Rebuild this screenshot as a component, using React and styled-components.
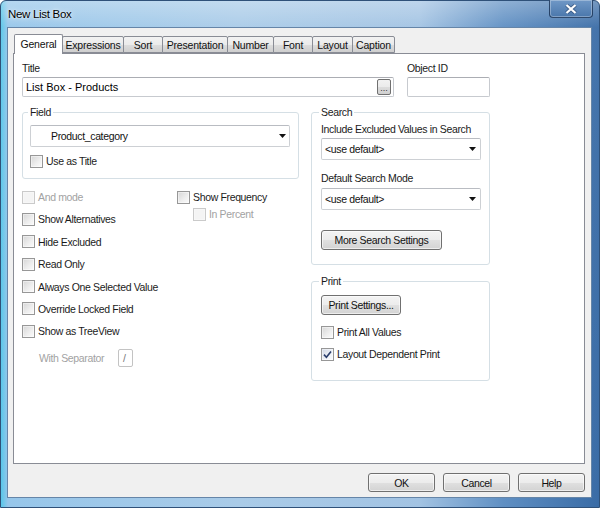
import React from 'react';
import styled, { createGlobalStyle } from 'styled-components';

const GlobalStyle = createGlobalStyle`
  html, body {
    margin: 0;
    padding: 0;
  }
  body {
    width: 600px;
    height: 508px;
    overflow: hidden;
    font-family: 'Liberation Sans', Arial, sans-serif;
    font-size: 10.5px;
    letter-spacing: -0.35px;
    color: #1b1b1b;
  }
  * {
    box-sizing: border-box;
  }
`;

const tabs = [
  { label: 'General', width: 49, active: true },
  { label: 'Expressions', width: 62 },
  { label: 'Sort', width: 40 },
  { label: 'Presentation', width: 66 },
  { label: 'Number', width: 47 },
  { label: 'Font', width: 40 },
  { label: 'Layout', width: 41 },
  { label: 'Caption', width: 43 },
];

const options = [
  { label: 'And mode', disabled: true },
  { label: 'Show Alternatives' },
  { label: 'Hide Excluded' },
  { label: 'Read Only' },
  { label: 'Always One Selected Value' },
  { label: 'Override Locked Field' },
  { label: 'Show as TreeView' },
];

const Check = ({ checked, disabled, label, indent }) => (
  <CheckRow $indent={indent}>
    <Box $disabled={disabled} $checked={checked}>
      {checked && (
        <svg width="9" height="9" viewBox="0 0 9 9">
          <path d="M1 4.6 L3.4 7.2 L8 1.4" fill="none" stroke="#2a3d6c" strokeWidth="1.6" />
        </svg>
      )}
    </Box>
    <Text $disabled={disabled}>{label}</Text>
  </CheckRow>
);

const Arrow = () => (
  <svg width="7" height="4" viewBox="0 0 7 4">
    <polygon points="0,0 7,0 3.5,4" fill="#111" />
  </svg>
);

const App = () => {
  return (
    <>
      <GlobalStyle />
      <Window>
        <TitleBar>
          <Caption>New List Box</Caption>
          <CloseButton aria-label="Close">
            <svg width="12" height="10" viewBox="0 0 12 10">
              <path d="M1.5 1 L10.5 9 M10.5 1 L1.5 9" stroke="#1c3457" strokeWidth="4" strokeOpacity="0.45" />
              <path d="M1.5 1 L10.5 9 M10.5 1 L1.5 9" stroke="#fff" strokeWidth="2.2" />
            </svg>
          </CloseButton>
        </TitleBar>

        <Client>
          <Tabs>
            {tabs.map((t) => (
              <Tab key={t.label} $active={t.active} $width={t.width}>
                {t.label}
              </Tab>
            ))}
          </Tabs>

          <Panel>
            <TopRow>
              <FieldBlock $width={372}>
                <Label>Title</Label>
                <TextBox>
                  <span>List Box - Products</span>
                  <EllipsisButton>...</EllipsisButton>
                </TextBox>
              </FieldBlock>
              <FieldBlock $width={83}>
                <Label>Object ID</Label>
                <TextBox />
              </FieldBlock>
            </TopRow>

            <Columns>
              <Column>
                <Group $pad="6px 8px 10px 7px">
                  <Legend>Field</Legend>
                  <Dropdown $indent={20}>
                    <span>Product_category</span>
                    <ArrowSlot $right={3}>
                      <Arrow />
                    </ArrowSlot>
                  </Dropdown>
                  <Spacer $h={7} />
                  <Check label="Use as Title" />
                </Group>

                <Options>
                  <OptionList>
                    {options.map((o) => (
                      <Check key={o.label} label={o.label} disabled={o.disabled} />
                    ))}
                    <SeparatorRow>
                      <SeparatorLabel>With Separator</SeparatorLabel>
                      <SeparatorInput>/</SeparatorInput>
                    </SeparatorRow>
                  </OptionList>
                  <FrequencyList>
                    <Check label="Show Frequency" />
                    <Check label="In Percent" disabled indent={16} />
                  </FrequencyList>
                </Options>
              </Column>

              <Column>
                <Group $pad="3px 8px 14px 9px">
                  <Legend>Search</Legend>
                  <Label>Include Excluded Values in Search</Label>
                  <Dropdown $indent={3}>
                    <span>&lt;use default&gt;</span>
                    <ArrowSlot $right={4}>
                      <Arrow />
                    </ArrowSlot>
                  </Dropdown>
                  <Spacer $h={11} />
                  <Label>Default Search Mode</Label>
                  <Dropdown $indent={3} $gap={1}>
                    <span>&lt;use default&gt;</span>
                    <ArrowSlot $right={4}>
                      <Arrow />
                    </ArrowSlot>
                  </Dropdown>
                  <Spacer $h={20} />
                  <PushButton $width={121}>More Search Settings</PushButton>
                </Group>

                <Group $pad="7px 8px 19px 9px" $top={9}>
                  <Legend>Print</Legend>
                  <PushButton $width={80}>Print Settings...</PushButton>
                  <Spacer $h={10} />
                  <Check label="Print All Values" />
                  <Spacer $h={8} />
                  <Check label="Layout Dependent Print" checked />
                </Group>
              </Column>
            </Columns>
          </Panel>

          <Footer>
            <PushButton $width={67} $height={19}>OK</PushButton>
            <PushButton $width={67} $height={19}>Cancel</PushButton>
            <PushButton $width={67} $height={19}>Help</PushButton>
          </Footer>
        </Client>
      </Window>
    </>
  );
};

const Window = styled.div`
  width: 600px;
  height: 508px;
  display: flex;
  flex-direction: column;
  padding: 0 7px 9px 6px;
  border: 1px solid #2f5179;
  border-radius: 6px 6px 0 0;
  background:
    linear-gradient(180deg, rgba(255, 255, 255, 0.3) 0, rgba(255, 255, 255, 0.05) 26px, rgba(255, 255, 255, 0) 100%),
    linear-gradient(90deg, #58c7ea 0, #96c6ea 7px, #a9cbe8 40%, #a2c3e3 70%, #5f8fc3 84%, #3a6ca6 100%);
`;

const TitleBar = styled.div`
  height: 26px;
  display: flex;
  align-items: flex-start;
  justify-content: space-between;
`;

const Caption = styled.div`
  padding: 7px 0 0 1px;
  font-size: 11.5px;
  letter-spacing: -0.3px;
  color: #000;
  text-shadow: 0 0 6px rgba(255, 255, 255, 0.9), 0 0 2px rgba(255, 255, 255, 0.8);
`;

const CloseButton = styled.button`
  width: 44px;
  height: 18px;
  margin: -1px -1px 0 0;
  padding: 0;
  display: flex;
  align-items: center;
  justify-content: center;
  border: 1px solid rgba(20, 40, 70, 0.7);
  border-top: none;
  border-radius: 0 0 4px 4px;
  background: linear-gradient(180deg, #7098c6, #4a77ac);
  box-shadow: inset 0 0 0 1px rgba(255, 255, 255, 0.3);
`;

const Client = styled.div`
  flex: 1;
  display: flex;
  flex-direction: column;
  padding: 6px 6px 0 5px;
  background: #f0f0f0;
  border: 1px solid #6585a8;
`;

const Tabs = styled.div`
  height: 19px;
  display: flex;
  align-items: flex-end;
  padding-left: 1px;
  position: relative;
  z-index: 1;
`;

const Tab = styled.div`
  width: ${(p) => p.$width}px;
  height: ${(p) => (p.$active ? 20 : 17)}px;
  margin-right: -1px;
  margin-bottom: ${(p) => (p.$active ? -1 : 0)}px;
  padding-top: ${(p) => (p.$active ? 3 : 2)}px;
  text-align: center;
  line-height: 13px;
  letter-spacing: -0.2px;
  border: 1px solid #898c95;
  border-bottom: ${(p) => (p.$active ? 'none' : '1px solid #898c95')};
  border-radius: 2px 2px 0 0;
  background: ${(p) => (p.$active ? '#fff' : 'linear-gradient(180deg, #f2f2f2 0%, #ebebeb 50%, #dddddd 51%, #cfcfcf 100%)')};
  color: #111;
`;

const Panel = styled.div`
  height: 411px;
  padding: 0 8px;
  background: #fff;
  border: 1px solid #898c95;
`;

const TopRow = styled.div`
  display: flex;
  gap: 13px;
  padding-top: 7px;
`;

const FieldBlock = styled.div`
  width: ${(p) => p.$width}px;
  display: flex;
  flex-direction: column;
`;

const Label = styled.span`
  display: block;
  height: 14px;
  line-height: 14px;
  margin-bottom: 2px;
  white-space: nowrap;
`;

const TextBox = styled.div`
  height: 20px;
  display: flex;
  align-items: center;
  justify-content: space-between;
  padding: 0 2px 0 3px;
  font-size: 11px;
  letter-spacing: 0;
  color: #000;
  background: #fff;
  border: 1px solid #c7cacf;
  border-top-color: #abadb3;
  border-radius: 2px;
`;

const EllipsisButton = styled.span`
  width: 14px;
  height: 16px;
  display: flex;
  align-items: flex-end;
  justify-content: center;
  padding-bottom: 2px;
  font-size: 9px;
  line-height: 8px;
  letter-spacing: 0;
  color: #333;
  border: 1px solid #707070;
  border-radius: 2px;
  background: linear-gradient(180deg, #f2f2f2 0%, #ebebeb 50%, #dddddd 51%, #cfcfcf 100%);
`;

const Columns = styled.div`
  display: grid;
  grid-template-columns: 277px 179px;
  column-gap: 12px;
  align-items: start;
  margin-top: 8px;
`;

const Column = styled.div`
  display: flex;
  flex-direction: column;
`;

const Group = styled.fieldset`
  margin: ${(p) => p.$top || 0}px 0 0;
  min-width: 0;
  padding: ${(p) => p.$pad};
  display: flex;
  flex-direction: column;
  align-items: flex-start;
  border: 1px solid #d5dfe5;
  border-radius: 3px;
`;

const Legend = styled.legend`
  margin-left: -2px;
  padding: 0 2px;
  line-height: 14px;
`;

const Dropdown = styled.div`
  align-self: stretch;
  height: 22px;
  margin-top: ${(p) => (p.$gap !== undefined ? p.$gap : 0)}px;
  display: flex;
  align-items: center;
  padding-left: ${(p) => p.$indent}px;
  background: #fff;
  border: 1px solid #cdd0d4;
  border-top-color: #b9bcc2;
  border-radius: 2px;
  color: #111;
`;

const ArrowSlot = styled.span`
  margin-left: auto;
  margin-right: ${(p) => p.$right}px;
  display: flex;
`;

const Spacer = styled.div`
  height: ${(p) => p.$h}px;
  flex: none;
`;

const CheckRow = styled.div`
  height: 14px;
  display: flex;
  align-items: center;
  gap: 3px;
  margin-left: ${(p) => p.$indent || 0}px;
  white-space: nowrap;
`;

const Box = styled.span`
  width: 13px;
  height: 13px;
  flex: none;
  display: flex;
  align-items: center;
  justify-content: center;
  border: 1px solid ${(p) => (p.$disabled ? '#cacaca' : '#979797')};
  background: ${(p) =>
    p.$disabled
      ? '#f4f4f4'
      : p.$checked
      ? 'linear-gradient(135deg, #cfd6e4 0%, #eef1f6 60%, #fafbfd 100%)'
      : 'linear-gradient(135deg, #d6d6d6 0%, #efefef 60%, #fbfbfb 100%)'};
  box-shadow: inset 0 0 0 1px ${(p) => (p.$disabled ? '#f7f7f7' : 'rgba(255, 255, 255, 0.45)')};
`;

const Text = styled.span`
  color: ${(p) => (p.$disabled ? '#a2a2a2' : '#1b1b1b')};
`;

const Options = styled.div`
  display: flex;
  margin-top: 11px;
`;

const OptionList = styled.div`
  width: 155px;
  display: flex;
  flex-direction: column;
  gap: 8.4px;
`;

const FrequencyList = styled.div`
  display: flex;
  flex-direction: column;
  gap: 3px;
`;

const SeparatorRow = styled.div`
  height: 18px;
  margin: 2px 0 0 17px;
  display: flex;
  align-items: center;
`;

const SeparatorLabel = styled.span`
  width: 79px;
  color: #a2a2a2;
  white-space: nowrap;
`;

const SeparatorInput = styled.span`
  width: 15px;
  height: 18px;
  padding-left: 4px;
  line-height: 16px;
  color: #777;
  background: #fff;
  border: 1px solid #c3c3c3;
  border-radius: 2px;
`;

const PushButton = styled.button`
  width: ${(p) => p.$width}px;
  height: ${(p) => p.$height || 20}px;
  padding: 0;
  font: inherit;
  letter-spacing: inherit;
  color: #111;
  border: 1px solid #707070;
  border-radius: 3px;
  background: linear-gradient(180deg, #f3f3f3 0%, #ececec 50%, #e0e0e0 51%, #d3d3d3 100%);
  box-shadow: inset 0 0 0 1px rgba(255, 255, 255, 0.6);
`;

const Footer = styled.div`
  display: flex;
  justify-content: flex-end;
  gap: 8px;
  padding-top: 9px;
`;

export default App;
